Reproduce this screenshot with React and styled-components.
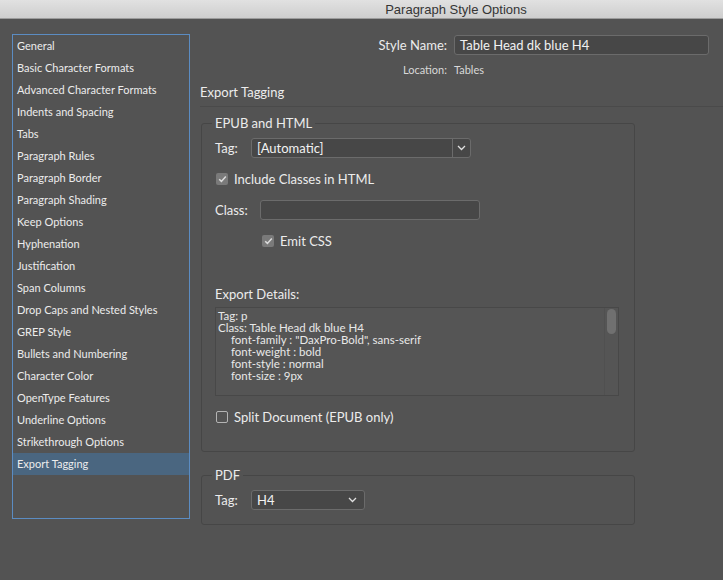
import styled, { createGlobalStyle } from "styled-components";

const GlobalStyle = createGlobalStyle`
    html, body {
        margin: 0;
        padding: 0;
        background: #535353;
    }
    body {
        font-family: "Lato", "Liberation Sans", sans-serif;
        color: #e6e6e6;
    }
`;

const sections = [
    "General",
    "Basic Character Formats",
    "Advanced Character Formats",
    "Indents and Spacing",
    "Tabs",
    "Paragraph Rules",
    "Paragraph Border",
    "Paragraph Shading",
    "Keep Options",
    "Hyphenation",
    "Justification",
    "Span Columns",
    "Drop Caps and Nested Styles",
    "GREP Style",
    "Bullets and Numbering",
    "Character Color",
    "OpenType Features",
    "Underline Options",
    "Strikethrough Options",
    "Export Tagging",
];

const details = [
    { text: "Tag: p", indent: false },
    { text: "Class: Table Head dk blue H4", indent: false },
    { text: 'font-family : "DaxPro-Bold", sans-serif', indent: true },
    { text: "font-weight : bold", indent: true },
    { text: "font-style : normal", indent: true },
    { text: "font-size : 9px", indent: true },
];

const Chevron = () => (
    <svg width="9" height="6" viewBox="0 0 9 6">
        <path d="M1 1 L4.5 4.5 L8 1" fill="none" stroke="#e0e0e0" strokeWidth="1.3" />
    </svg>
);

const Check = ({ checked }) => (
    <CheckBox checked={checked}>
        {checked && (
            <svg width="9" height="8" viewBox="0 0 9 8">
                <path d="M1.2 4.2 L3.4 6.4 L7.8 1.4" fill="none" stroke="#dcdcdc" strokeWidth="1.5" />
            </svg>
        )}
    </CheckBox>
);

const App = () => {
    return (
        <Window>
            <GlobalStyle />
            <TitleBar>Paragraph Style Options</TitleBar>
            <Body>
                <SideList>
                    {sections.map((s) => (
                        <SideItem key={s} selected={s === "Export Tagging"}>{s}</SideItem>
                    ))}
                </SideList>
                <Main>
                    <HeadGrid>
                        <HeadLabel>Style Name:</HeadLabel>
                        <NameInput>Table Head dk blue H4</NameInput>
                        <SmallLabel>Location:</SmallLabel>
                        <SmallValue>Tables</SmallValue>
                    </HeadGrid>
                    <PanelTitle>Export Tagging</PanelTitle>
                    <Separator />

                    <Group>
                        <Legend>EPUB and HTML</Legend>
                        <Row top={7}>
                            <FieldLabel>Tag:</FieldLabel>
                            <Select width={220}>
                                <span>[Automatic]</span>
                                <SelectButton divided>
                                    <Chevron />
                                </SelectButton>
                            </Select>
                        </Row>
                        <CheckRow top={14}>
                            <Check checked />
                            <span>Include Classes in HTML</span>
                        </CheckRow>
                        <Row top={14}>
                            <FieldLabel wide>Class:</FieldLabel>
                            <TextInput />
                        </Row>
                        <CheckRow top={14} indent={46}>
                            <Check checked />
                            <span>Emit CSS</span>
                        </CheckRow>
                        <DetailsLabel>Export Details:</DetailsLabel>
                        <Details>
                            <DetailsText>
                                {details.map((d) => (
                                    <DetailLine key={d.text} indent={d.indent}>{d.text}</DetailLine>
                                ))}
                            </DetailsText>
                            <ScrollTrack>
                                <ScrollThumb />
                            </ScrollTrack>
                        </Details>
                        <CheckRow top={14}>
                            <Check />
                            <span>Split Document (EPUB only)</span>
                        </CheckRow>
                        <GroupEnd height={27} />
                    </Group>

                    <Group top={16}>
                        <Legend>PDF</Legend>
                        <Row top={7}>
                            <FieldLabel>Tag:</FieldLabel>
                            <Select width={114}>
                                <span>H4</span>
                                <SelectButton>
                                    <Chevron />
                                </SelectButton>
                            </Select>
                        </Row>
                        <GroupEnd height={14} />
                    </Group>
                </Main>
            </Body>
        </Window>
    );
};

const Window = styled.div`
    width: 723px;
    height: 580px;
    overflow: hidden;
    background: #535353;
    display: flex;
    flex-direction: column;
`;

const TitleBar = styled.div`
    height: 19px;
    flex-shrink: 0;
    background: linear-gradient(#e1e1e1, #cecece);
    border-bottom: 1px solid #9c9c9c;
    box-sizing: border-box;
    padding-left: 189px;
    text-align: center;
    font-family: "Liberation Sans", sans-serif;
    font-size: 13px;
    line-height: 19px;
    color: #353535;
`;

const Body = styled.div`
    display: flex;
    align-items: flex-start;
    padding: 15px 0 0 12px;
`;

const SideList = styled.div`
    width: 178px;
    height: 485px;
    box-sizing: border-box;
    border: 1px solid #5b8cc2;
    display: flex;
    flex-direction: column;
`;

const SideItem = styled.div`
    height: 22px;
    line-height: 22px;
    padding-left: 4px;
    font-size: 11px;
    color: #ececec;
    background: ${(p) => (p.selected ? "#4a6680" : "transparent")};
    white-space: nowrap;
`;

const Main = styled.div`
    flex: 1;
    padding: 1px 0 0 10px;
    display: flex;
    flex-direction: column;
`;

const HeadGrid = styled.div`
    display: grid;
    grid-template-columns: 247px 255px;
    column-gap: 7px;
    row-gap: 8px;
    align-items: center;
`;

const HeadLabel = styled.div`
    text-align: right;
    font-size: 13px;
    color: #ececec;
`;

const NameInput = styled.div`
    height: 20px;
    box-sizing: border-box;
    background: #474747;
    border: 1px solid #6b6b6b;
    border-radius: 3px;
    padding-left: 5px;
    font-size: 13px;
    line-height: 18px;
    color: #f2f2f2;
`;

const SmallLabel = styled.div`
    text-align: right;
    font-size: 11px;
    color: #d8d8d8;
`;

const SmallValue = styled.div`
    font-size: 11px;
    color: #d8d8d8;
`;

const PanelTitle = styled.div`
    margin-top: 8px;
    font-size: 13px;
    color: #ececec;
`;

const Separator = styled.div`
    margin-top: 6px;
    height: 1px;
    background: #4a4a4a;
`;

const Group = styled.fieldset`
    margin: ${(p) => p.top || 9}px 0 0 1px;
    width: 434px;
    box-sizing: border-box;
    padding: 0 0 0 13px;
    border: 1px solid #464646;
    border-radius: 3px;
    min-width: 0;
`;

const Legend = styled.legend`
    padding: 0 3px;
    margin-left: -3px;
    font-size: 13px;
    line-height: 15px;
    color: #ececec;
`;

const Row = styled.div`
    display: flex;
    align-items: center;
    margin-top: ${(p) => p.top || 6}px;
    height: 20px;
`;

const FieldLabel = styled.div`
    width: ${(p) => (p.wide ? 45 : 36)}px;
    font-size: 13px;
    color: #ececec;
`;

const Select = styled.div`
    width: ${(p) => p.width}px;
    height: 20px;
    box-sizing: border-box;
    background: #474747;
    border: 1px solid #6b6b6b;
    border-radius: 3px;
    display: flex;
    align-items: center;
    justify-content: space-between;
    padding-left: 5px;
    font-size: 13px;
    color: #f2f2f2;
`;

const SelectButton = styled.div`
    width: 17px;
    height: 100%;
    display: flex;
    align-items: center;
    justify-content: center;
    border-left: ${(p) => (p.divided ? "1px solid #6b6b6b" : "none")};
    padding-right: ${(p) => (p.divided ? 0 : 3)}px;
`;

const TextInput = styled.div`
    width: 220px;
    height: 20px;
    box-sizing: border-box;
    background: #474747;
    border: 1px solid #6b6b6b;
    border-radius: 3px;
`;

const CheckRow = styled.div`
    display: flex;
    align-items: center;
    gap: 6px;
    margin-top: ${(p) => p.top}px;
    padding-left: ${(p) => (p.indent || 0) + 1}px;
    height: 14px;
    font-size: 13px;
    color: #ececec;
`;

const CheckBox = styled.div`
    width: 12px;
    height: 12px;
    box-sizing: border-box;
    border-radius: 2px;
    display: flex;
    align-items: center;
    justify-content: center;
    background: ${(p) => (p.checked ? "#7a7a7a" : "transparent")};
    border: ${(p) => (p.checked ? "none" : "1px solid #b4b4b4")};
`;

const DetailsLabel = styled.div`
    margin-top: 38px;
    font-size: 13px;
    color: #ececec;
`;

const Details = styled.div`
    margin-top: 5px;
    width: 404px;
    height: 89px;
    box-sizing: border-box;
    border: 1px solid #484848;
    background: #555555;
    display: flex;
`;

const DetailsText = styled.div`
    flex: 1;
    padding: 2px 0 0 2px;
`;

const DetailLine = styled.div`
    font-size: 11.5px;
    line-height: 12px;
    color: #e8e8e8;
    padding-left: ${(p) => (p.indent ? 13 : 0)}px;
    white-space: pre;
`;

const ScrollTrack = styled.div`
    width: 13px;
    padding-top: 1px;
    display: flex;
    justify-content: center;
    border-left: 1px solid #505050;
`;

const ScrollThumb = styled.div`
    width: 9px;
    height: 25px;
    border-radius: 5px;
    background: #707070;
`;

const GroupEnd = styled.div`
    height: ${(p) => p.height}px;
`;

export default App;
